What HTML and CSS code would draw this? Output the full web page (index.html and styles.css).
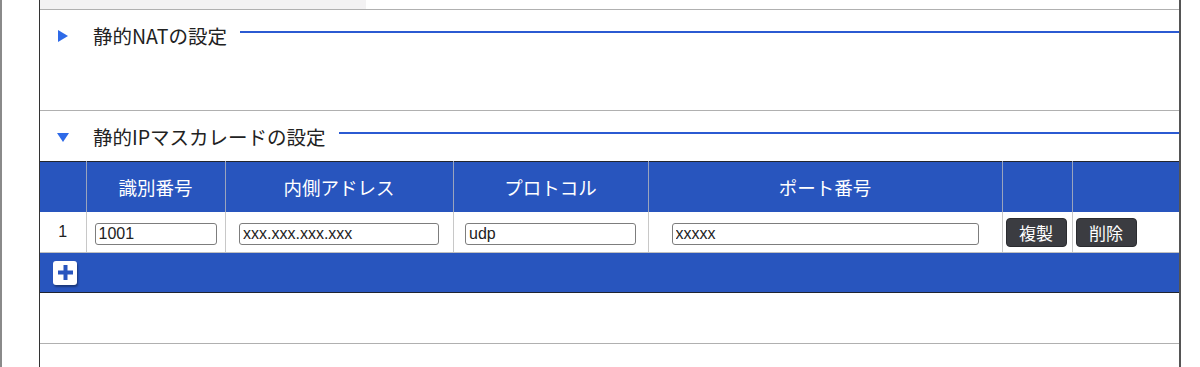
FILE: index.html
```html
<!DOCTYPE html>
<html lang="ja">

<head>
  <meta charset="UTF-8">
  <meta name="viewport" content="width=device-width, initial-scale=1.0">
  <title>静的IPマスカレードの設定</title>
  <link rel="stylesheet" href="styles.css">
</head>

<body>
  <div class="page">
    <div class="panel">
      <div class="prev">
        <div class="prev-box"></div>
      </div>

      <!-- 静的NAT (closed) -->
      <section class="sec">
        <div class="sec-head">
          <span class="tri tri-right"></span>
          <h2 class="sec-title">静的NATの設定</h2>
          <span class="sec-rule"></span>
        </div>
      </section>

      <!-- 静的IPマスカレード (open) -->
      <section class="sec">
        <div class="sec-head">
          <span class="tri tri-down"></span>
          <h2 class="sec-title">静的IPマスカレードの設定</h2>
          <span class="sec-rule"></span>
        </div>
        <table class="grid">
          <colgroup>
            <col class="c-no">
            <col class="c-id">
            <col class="c-addr">
            <col class="c-proto">
            <col class="c-port">
            <col class="c-copy">
            <col class="c-del">
          </colgroup>
          <thead>
            <tr>
              <th></th>
              <th>識別番号</th>
              <th>内側アドレス</th>
              <th>プロトコル</th>
              <th>ポート番号</th>
              <th></th>
              <th></th>
            </tr>
          </thead>
          <tbody>
            <tr>
              <td class="no">1</td>
              <td><input class="in in-id" type="text" value="1001"></td>
              <td><input class="in in-addr" type="text" value="xxx.xxx.xxx.xxx"></td>
              <td><input class="in in-proto" type="text" value="udp"></td>
              <td><input class="in in-port" type="text" value="xxxxx"></td>
              <td class="act"><button class="btn">複製</button></td>
              <td class="act"><button class="btn">削除</button></td>
            </tr>
          </tbody>
          <tfoot>
            <tr>
              <td colspan="7">
                <button class="add" title="追加">
                  <svg width="17" height="17" viewBox="0 0 17 17">
                    <path d="M8.5 1v15M1 8.5h15" stroke="#2855be" stroke-width="4" fill="none" />
                  </svg>
                </button>
              </td>
            </tr>
          </tfoot>
        </table>
      </section>

      <section class="sec sec-next"></section>
    </div>
  </div>
</body>

</html>
```

FILE: styles.css
```css
html {
  margin: 0;
  padding: 0;
  background: #fff;
}

body {
  margin: 0;
  padding: 0;
  font-family: "Noto Sans CJK JP", "Liberation Sans", sans-serif;
  color: #222;
}

.page {
  min-height: 367px;
  border-left: 2px solid #8a8a8a;
  padding-left: 37px;
}

.panel {
  width: 1139px;
  min-height: 367px;
  border-left: 1px solid #333;
  border-right: 2px solid #555;
}

.prev {
  height: 9px;
}

.prev-box {
  width: 326px;
  height: 9px;
  background: #f3f2f3;
}

.sec {
  border-top: 1px solid #b0b0b0;
  padding-bottom: 50px;
}

.sec-next {
  padding-bottom: 0;
  height: 24px;
}

.sec-head {
  display: flex;
  align-items: flex-start;
  box-sizing: border-box;
  height: 50px;
  padding: 14px 0 0 18px;
}

.tri {
  display: block;
  width: 0;
  height: 0;
  flex: none;
}

.tri-right {
  margin-top: 6px;
  border-left: 10px solid #2e6ae8;
  border-top: 6px solid transparent;
  border-bottom: 6px solid transparent;
}

.tri-down {
  margin-top: 8px;
  margin-left: -1px;
  border-top: 9px solid #2e6ae8;
  border-left: 6px solid transparent;
  border-right: 6px solid transparent;
}

.sec-title {
  margin: 0 0 0 25px;
  font-size: 19.5px;
  font-weight: 400;
  line-height: 24px;
  white-space: nowrap;
}

.tri-down + .sec-title {
  margin-left: 24px;
}

.sec-rule {
  flex: 1;
  height: 2px;
  margin: 7px 0 0 13px;
  background: #2b5ad2;
}

/* table */
.grid {
  width: 1139px;
  border-collapse: collapse;
  table-layout: fixed;
  border-top: 1px solid #23262e;
}

.c-no { width: 46px; }
.c-id { width: 139px; }
.c-addr { width: 228px; }
.c-proto { width: 195px; }
.c-port { width: 354px; }
.c-copy { width: 70px; }
.c-del { width: 107px; }

.grid th {
  height: 50px;
  padding: 0;
  background: #2855be;
  color: #fff;
  font-size: 18.5px;
  font-weight: 400;
  text-align: center;
  border-left: 1px solid #9aa4bd;
}

.grid th:first-child,
.grid td:first-child {
  border-left: 0;
}

.grid tbody td {
  height: 40px;
  padding: 0;
  text-align: center;
  vertical-align: middle;
  border-left: 1px solid #c8c8c8;
  border-bottom: 1px solid #c0c0c0;
}

.no {
  font-family: "Liberation Sans", sans-serif;
  font-size: 16px;
}

.in {
  box-sizing: border-box;
  height: 22px;
  margin: 0;
  padding: 0 3px;
  border: 1px solid #7d7d7d;
  border-radius: 3px;
  background: #fff;
  font-family: "Liberation Sans", sans-serif;
  font-size: 16px;
  color: #222;
  vertical-align: middle;
}

.in-id { width: 122px; }
.in-addr { width: 200px; }
.in-proto { width: 171px; }
.in-port { width: 307px; }

.grid td.act {
  text-align: left;
  padding-left: 3px;
}

.btn {
  box-sizing: border-box;
  width: 61px;
  height: 29px;
  margin: 0;
  padding: 0;
  border: 1px solid #2a2b2f;
  border-radius: 4px;
  background: #3b3c41;
  color: #fff;
  font-family: "Noto Sans CJK JP", sans-serif;
  font-size: 17px;
  line-height: 27px;
  vertical-align: middle;
}

.grid tfoot td {
  height: 39px;
  padding: 0 0 0 13px;
  background: #2855be;
  border-bottom: 1px solid #1f2430;
  vertical-align: middle;
}

.add {
  display: flex;
  align-items: center;
  justify-content: center;
  width: 24px;
  height: 24px;
  margin: 0;
  padding: 0;
  border: 0;
  border-radius: 3px;
  background: #fff;
  box-shadow: 1px 2px 2px rgba(0, 0, 0, 0.35);
}
```
